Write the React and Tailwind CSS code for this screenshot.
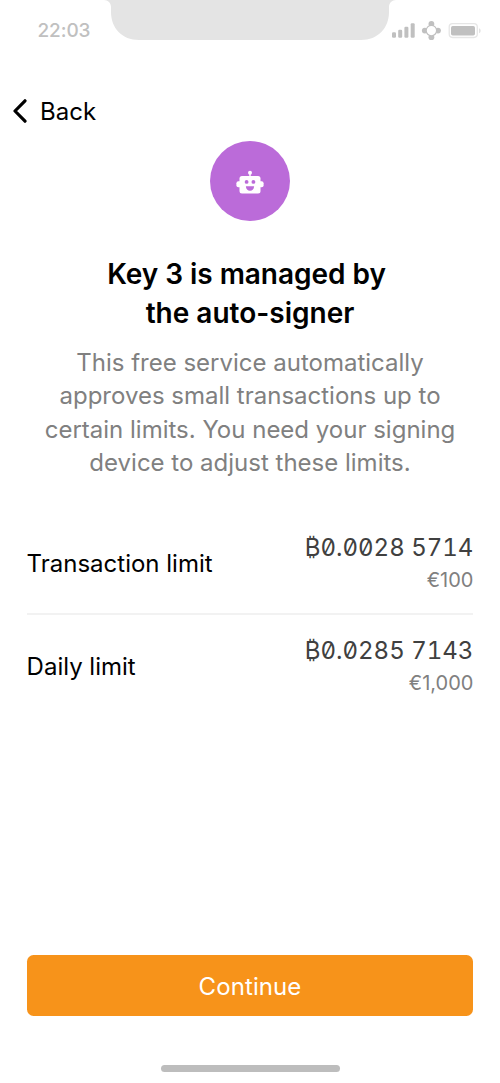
function StatusBar() {
  return (
    <header className="flex h-[60px] items-start justify-between">
      <span className="w-[104px] shrink-0 pt-[19px] pl-[37.5px] text-[19px] leading-6 font-medium tracking-[-0.1px] whitespace-nowrap text-[#c0c0c0]">
        22:03
      </span>
      <svg className="h-10 w-[292px] shrink-0" viewBox="104 0 292 40" fill="#e4e4e4">
        <path d="M104 0C108 0 111 3 111 7V12C111 28 122 40 139 40H361C378 40 389 28 389 12V7C389 3 392 0 396 0Z" />
      </svg>
      <svg className="h-[60px] w-[104px] shrink-0" viewBox="396 0 104 60" overflow="visible">
        <g fill="#c0c0c0">
          <rect x="392" y="32.2" width="4" height="5.6" rx="1.2" />
          <rect x="398.2" y="29.8" width="4" height="8" rx="1.2" />
          <rect x="404.4" y="26.7" width="4" height="11.1" rx="1.2" />
          <rect x="410.7" y="23.3" width="4" height="14.5" rx="1.2" />
          <circle cx="431.4" cy="24" r="2.9" />
          <circle cx="431.4" cy="37.2" r="2.9" />
          <circle cx="424.8" cy="30.6" r="2.9" />
          <circle cx="438" cy="30.6" r="2.9" />
          <rect x="451" y="26" width="24" height="9.5" rx="1.7" />
        </g>
        <circle cx="431.4" cy="30.6" r="5.2" fill="white" stroke="#c0c0c0" strokeWidth="1.2" />
        <rect x="449.2" y="23.7" width="28.1" height="13.8" rx="3.4" fill="none" stroke="#e6e6e6" strokeWidth="1.3" />
        <path d="M479 28.2C481.2 29 481.2 32.4 479 33.2Z" fill="#e2e2e2" />
      </svg>
    </header>
  );
}

function RobotBadge() {
  return (
    <div className="mx-auto size-20 shrink-0 rounded-full bg-[#bb6bd9]">
      <svg className="size-20" viewBox="210 141 80 80">
        <g fill="white">
          <circle cx="250" cy="172.8" r="2" />
          <rect x="249.3" y="173" width="1.4" height="4" />
          <rect x="236.4" y="181.3" width="27.2" height="6" rx="2" />
          <rect x="239.5" y="176" width="21" height="17.5" rx="2.5" />
        </g>
        <g fill="#bb6bd9">
          <circle cx="246.6" cy="181.9" r="1.9" />
          <circle cx="253.4" cy="181.9" r="1.9" />
          <path d="M245.9 186.2H254.1C254 189 252.4 190.8 250 190.8S246 189 245.9 186.2Z" />
        </g>
      </svg>
    </div>
  );
}

function LimitRow({ label, btc, eur }) {
  return (
    <div className="flex h-[96.5px] items-center justify-between">
      <span className="text-2xl leading-8 whitespace-nowrap text-black">{label}</span>
      <div className="flex flex-col items-end whitespace-nowrap">
        <span className="text-2xl leading-8 text-[#404040] slashed-zero tabular-nums">{btc}</span>
        <span className="text-xl leading-8 text-[#808080]">{eur}</span>
      </div>
    </div>
  );
}

export default function App() {
  return (
    <main className="flex h-[1083px] w-[500px] flex-col overflow-hidden bg-white font-['Inter',sans-serif]">
      <StatusBar />
      <button className="mt-[35px] flex h-8 items-center self-start pl-3 text-2xl leading-8 text-black">
        <svg className="mr-[13px] h-[26px] w-[15px]" viewBox="0 0 15 26" fill="none" stroke="black" strokeWidth="3.2" strokeLinecap="round" strokeLinejoin="round">
          <path d="M13 2.8L3 13L13 23.2" />
        </svg>
        <span className="pt-0.5">Back</span>
      </button>
      <div className="mt-[14px] flex">
        <RobotBadge />
      </div>
      <h1 className="mt-[34px] text-center text-[28px] leading-[38.5px] font-semibold text-black">
        <span className="mr-[7px] block tracking-[-0.03px]">Key 3 is managed by</span>
        <span className="block">the auto-signer</span>
      </h1>
      <p className="mt-[14px] text-center text-2xl leading-[33.3px] whitespace-nowrap text-[#808080]">
        This free service automatically
        <br />
        approves small transactions up to
        <br />
        certain limits. You need your signing
        <br />
        device to adjust these limits.
      </p>
      <section className="mx-[26.6px] mt-[37px]">
        <LimitRow label="Transaction limit" btc="₿0.0028 5714" eur="€100" />
        <hr className="mb-[3.75px] h-0.5 border-0 bg-[#f2f2f2]" />
        <LimitRow label="Daily limit" btc="₿0.0285 7143" eur="€1,000" />
      </section>
      <button className="mx-[26.6px] mt-auto h-[61.5px] shrink-0 rounded-[6.5px] bg-[#f7931a] pt-[3px] text-2xl tracking-[0.1px] text-white">
        Continue
      </button>
      <div className="mx-auto mt-[49px] mb-[11px] h-[7px] w-[179px] shrink-0 rounded-full bg-[#bdbdbd]" />
    </main>
  );
}
